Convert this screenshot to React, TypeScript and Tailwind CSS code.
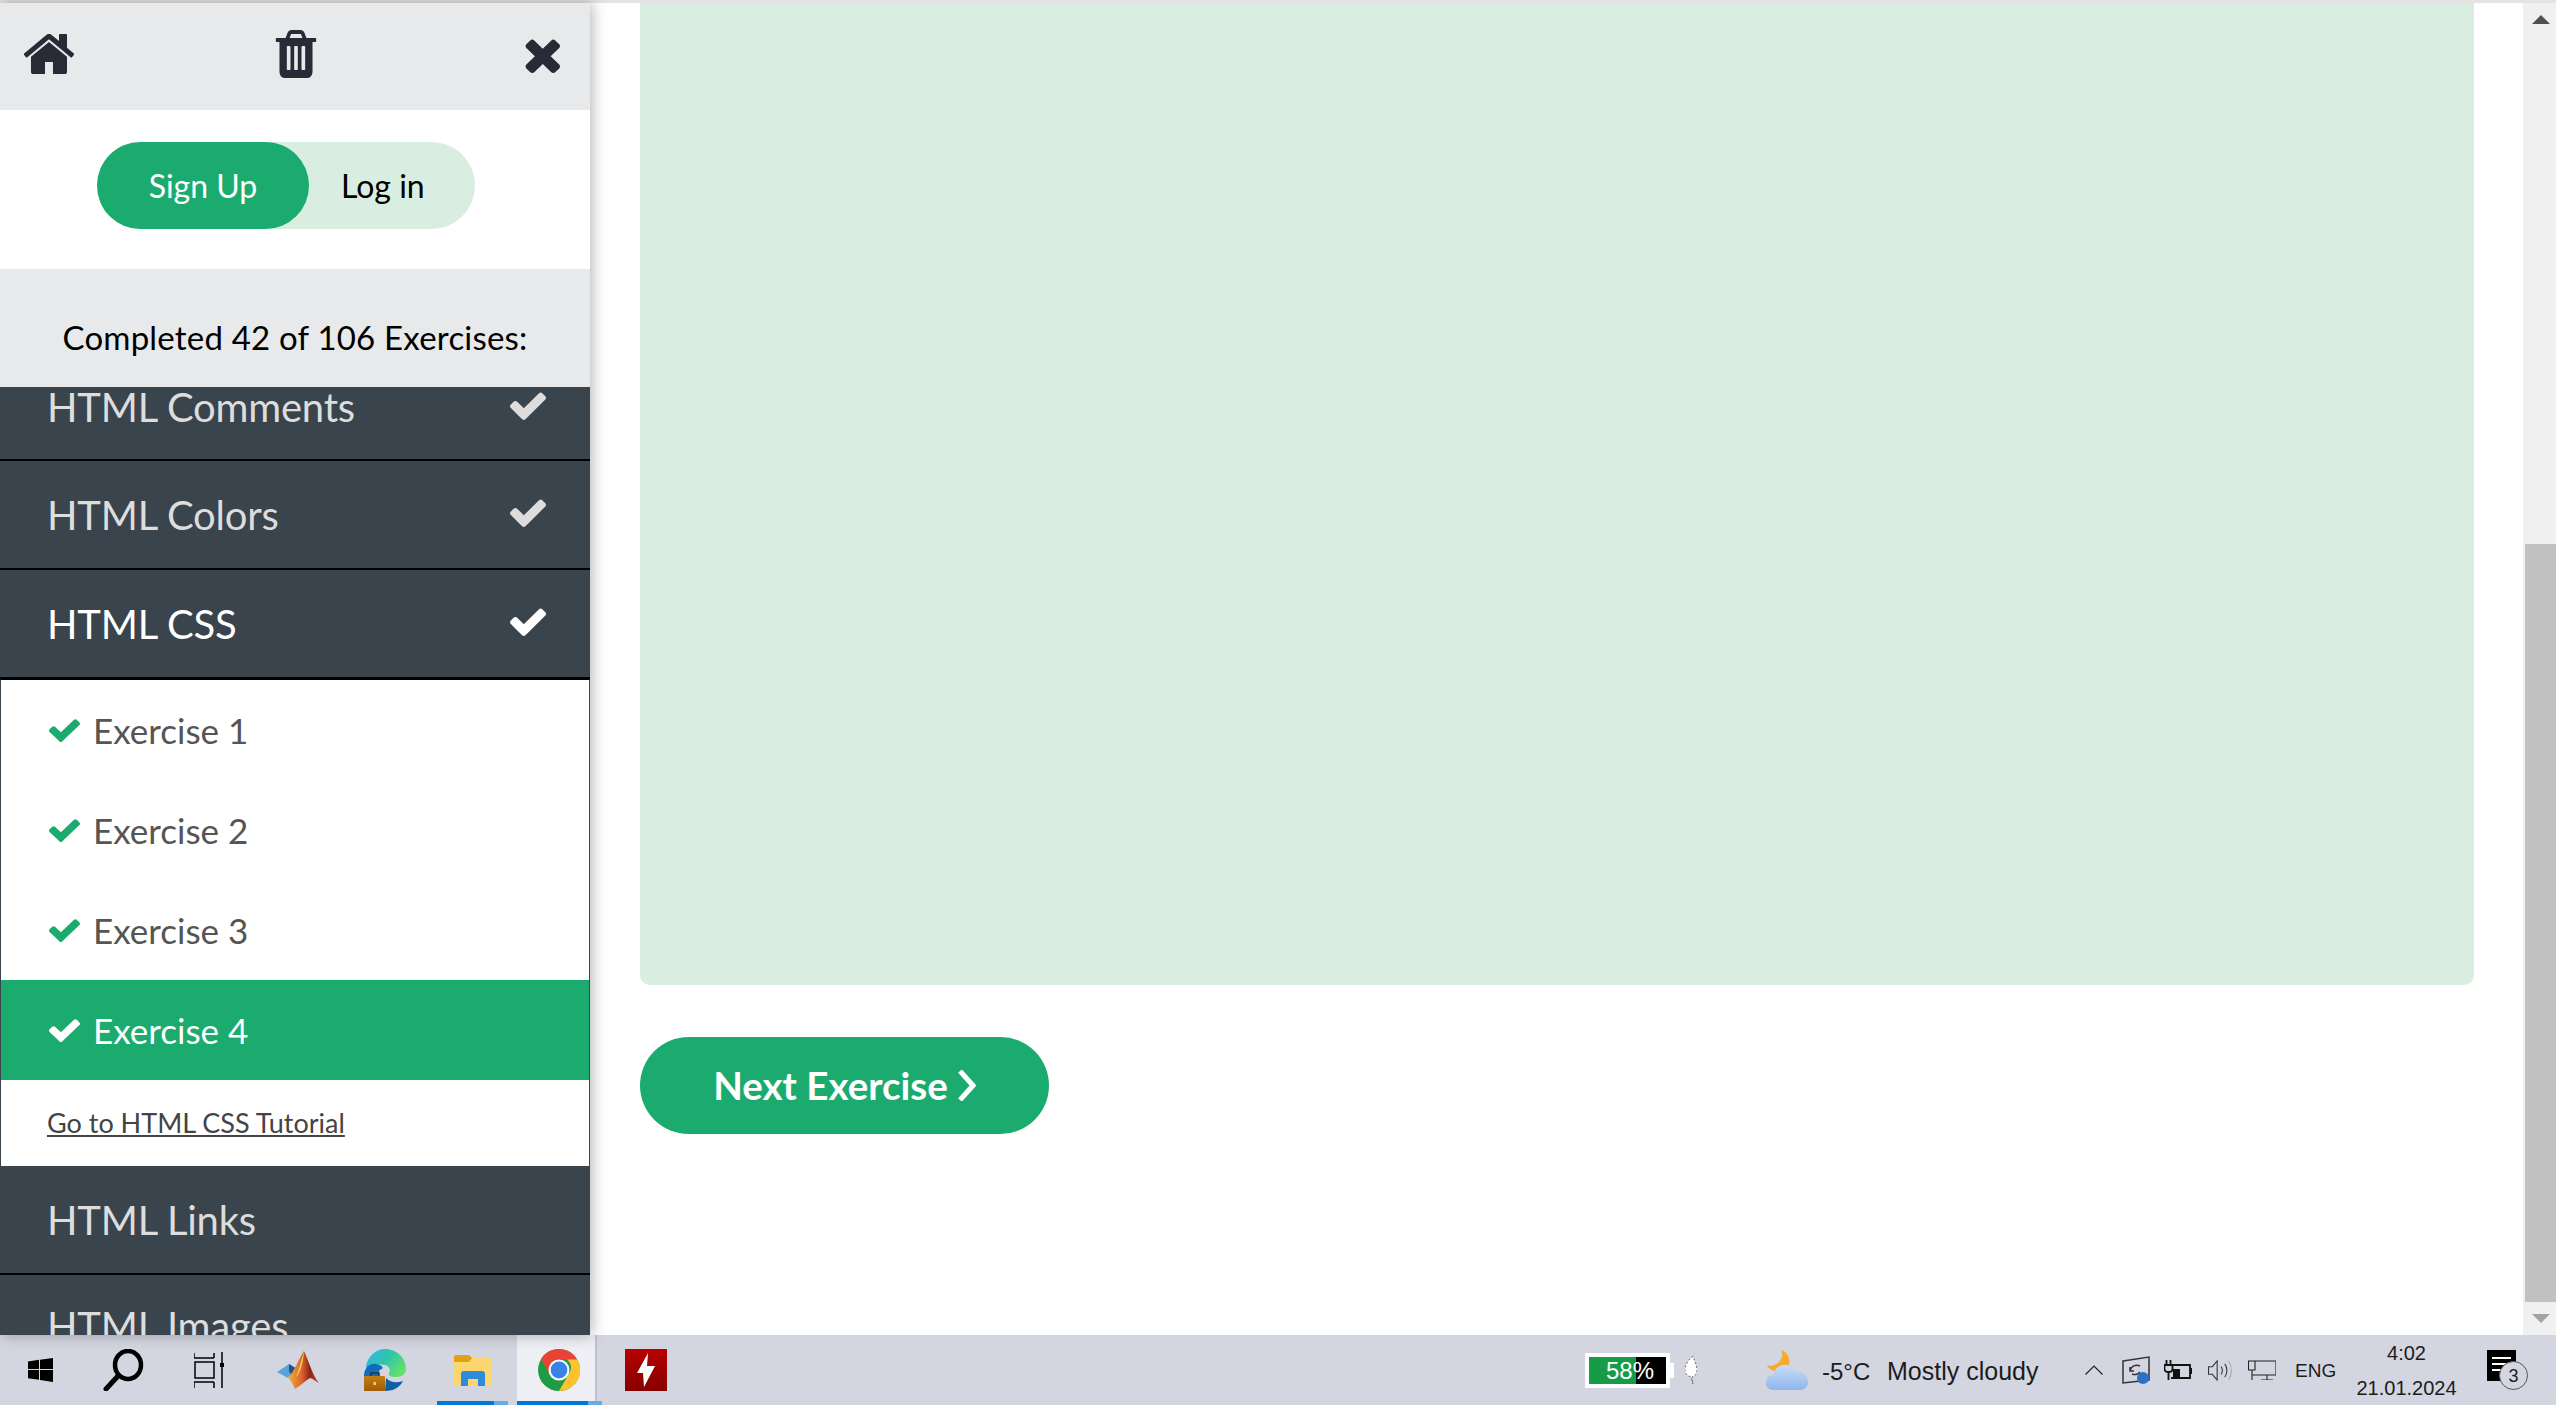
import type { ReactNode } from "react";

const checkPath =
  "M1671 566q0 40-28 68l-724 724-136 136q-28 28-68 28t-68-28l-136-136-362-362q-28-28-28-68t28-68l136-136q28-28 68-28t68 28l294 295 656-657q28-28 68-28t68 28l136 136q28 28 28 68z";

const Check = ({ className }: { className: string }) => (
  <svg viewBox="121 266 1550 1260" preserveAspectRatio="none" className={className} fill="currentColor">
    <path d={checkPath} />
  </svg>
);

const HomeIcon = () => (
  <svg viewBox="97 256 1599 1280" preserveAspectRatio="none" className="h-[40px] w-[50px]" fill="currentColor">
    <path d="M1472 992v480q0 26-19 45t-45 19h-384v-384h-256v384h-384q-26 0-45-19t-19-45v-480q0-1 .5-3t.5-3l575-474 575 474q1 2 1 6zm223-69l-62 74q-8 9-21 11h-3q-13 0-21-7l-692-577-692 577q-12 8-24 7-13-2-21-11l-62-74q-8-10-7-23.5t11-21.5l719-599q32-26 76-26t76 26l244 204v-195q0-14 9-23t23-9h192q14 0 23 9t9 23v408l219 182q10 8 11 21.5t-7 23.5z" />
  </svg>
);

const TrashIcon = () => (
  <svg viewBox="128 128 1536 1536" preserveAspectRatio="none" className="mr-[6px] h-[48px] w-[44px]" fill="currentColor">
    <path d="M704 1376v-704q0-14-9-23t-23-9h-64q-14 0-23 9t-9 23v704q0 14 9 23t23 9h64q14 0 23-9t9-23zm256 0v-704q0-14-9-23t-23-9h-64q-14 0-23 9t-9 23v704q0 14 9 23t23 9h64q14 0 23-9t9-23zm256 0v-704q0-14-9-23t-23-9h-64q-14 0-23 9t-9 23v704q0 14 9 23t23 9h64q14 0 23-9t9-23zm-544-992h448l-48-117q-7-9-17-11h-317q-10 2-17 11zm928 32v64q0 14-9 23t-23 9h-96v948q0 83-47 143.5t-113 60.5h-832q-66 0-113-58.5t-47-141.5v-952h-96q-14 0-23-9t-9-23v-64q0-14 9-23t23-9h309l70-167q15-37 54-63t79-26h320q40 0 79 26t54 63l70 167h309q14 0 23 9t9 23z" />
  </svg>
);

const CloseIcon = () => (
  <svg viewBox="214 238 1276 1316" preserveAspectRatio="none" className="h-[37px] w-[37px]" fill="currentColor">
    <path d="M1490 1322q0 40-28 68l-136 136q-28 28-68 28t-68-28l-294-294-294 294q-28 28-68 28t-68-28l-136-136q-28-28-28-68t28-68l294-294-294-294q-28-28-28-68t28-68l136-136q28-28 68-28t68 28l294 294 294-294q28-28 68-28t68 28l136 136q28 28 28 68t-28 68l-294 294 294 294q28 28 28 68z" />
  </svg>
);

const Topic = ({ name, bright, checked, cut }: { name: string; bright?: boolean; checked?: boolean; cut?: "top" | "bottom" }) => (
  <div
    className={`flex shrink-0 justify-between bg-[#3a444d] pl-[47px] pr-[44px] ${
      cut === "top"
        ? "h-[74px] items-start border-b-2 border-black"
        : cut === "bottom"
          ? "h-[60px] items-start pt-[31px]"
          : "h-[109px] items-center border-b-2 border-black"
    } ${bright ? "text-white" : "text-[#dddddd]"}`}
  >
    <span className={`text-[40px] leading-none tracking-[-0.2px] ${cut ? "" : "pt-[1px]"}`}>{name}</span>
    {checked && <Check className={`h-[29px] w-[36px] shrink-0 ${cut === "top" ? "mt-[4px]" : "-mt-[4px]"}`} />}
  </div>
);

const Exercise = ({ n, active }: { n: number; active?: boolean }) => (
  <div className={`flex h-[100px] items-center gap-[13px] pl-[48px] ${active ? "bg-[#1cab6e] text-white" : "text-[#555555]"}`}>
    <Check className={`h-[24px] w-[31px] ${active ? "text-white" : "text-[#1cab6e]"}`} />
    <span className="text-[35px] leading-none">Exercise {n}</span>
  </div>
);

const WindowsLogo = () => (
  <svg viewBox="0 0 25 24" className="h-[24px] w-[25px]" fill="#000">
    <path d="M0 3.4 11 1.8V11H0zM12 1.7 25 0V11H12zM0 12H11V21.7L0 20.2zM12 12H25V24L12 21.9z" />
  </svg>
);

const SearchGlyph = () => (
  <svg viewBox="0 0 42 42" className="h-[42px] w-[42px]" fill="none" stroke="#000">
    <ellipse cx="25" cy="16" rx="13" ry="14" strokeWidth="4.5" />
    <path d="M15 27 3 40" strokeWidth="5" strokeLinecap="round" />
  </svg>
);

const TaskView = () => (
  <svg viewBox="0 0 30 36" className="h-[36px] w-[30px]" fill="none" stroke="#000" strokeWidth="1.5">
    <path d="M0 6H20M0 1V6M20 1V6M1 10H20V26H1zM0 30H20M0 30V36M20 30V36M28 0V36" />
    <rect x="26" y="11" width="4" height="4" fill="#000" stroke="none" />
  </svg>
);

const Matlab = () => (
  <svg viewBox="0 0 42 38" className="h-[38px] w-[42px]">
    <defs>
      <linearGradient id="mlb" x1="0" y1="0" x2="1" y2="0">
        <stop offset="0" stopColor="#f0b040" />
        <stop offset="0.45" stopColor="#d9652a" />
        <stop offset="0.7" stopColor="#8e2418" />
        <stop offset="1" stopColor="#c2452a" />
      </linearGradient>
    </defs>
    <path d="M0 21 12 13 20 18 11 27z" fill="#5aa4de" />
    <path d="M12 13 20 18 14 24 12 20z" fill="#27527f" />
    <path d="M27 0C31 8 36 26 42 32 38 30 35 27 33 27 28 30 23 35 18 38 16 33 13 29 11 26 17 22 22 7 27 0z" fill="url(#mlb)" />
    <path d="M27 0C24 10 22 20 19 26 22 24 26 14 27 0z" fill="#f4d267" />
  </svg>
);

const Edge = () => (
  <svg viewBox="0 0 42 42" className="h-[42px] w-[42px]">
    <defs>
      <linearGradient id="edb" x1="0" y1="0" x2="1" y2="0.6">
        <stop offset="0" stopColor="#2fb4f0" />
        <stop offset="0.55" stopColor="#2fc6a8" />
        <stop offset="1" stopColor="#63e06a" />
      </linearGradient>
      <linearGradient id="edc" x1="0" y1="0" x2="0" y2="1">
        <stop offset="0" stopColor="#c27f12" />
        <stop offset="1" stopColor="#a15c0a" />
      </linearGradient>
    </defs>
    <path d="M2 17C4 7 12 0 21 0 33 0 42 9 42 20 42 25 38 28 32 28 27 28 24 27 25 24 27 20 25 17 21 16 14 14 6 17 2 24z" fill="url(#edb)" />
    <path d="M0 27C0 19 6 14 12 15 17 16 20 18 18 20 14 21 14 24 16 28H0z" fill="#0f6cc0" />
    <path d="M21 42C30 42 36 38 39 32 33 34 27 34 22 29z" fill="#0f5ea8" />
    <rect x="7" y="24" width="8" height="5" fill="none" stroke="#333" strokeWidth="1.5" />
    <rect x="0" y="27" width="21" height="15" rx="1" fill="url(#edc)" />
    <rect x="9.5" y="33" width="2.5" height="3" fill="#f2d05c" />
  </svg>
);

const Explorer = () => (
  <svg viewBox="0 0 38 31" className="h-[31px] w-[38px]">
    <path d="M0 2C0 1 1 0 2 0H15L18 3H37C37.5 3 38 3.5 38 4V29C38 30 37 31 36 31H2C1 31 0 30 0 29z" fill="#fbd56d" />
    <path d="M0 2C0 1 1 0 2 0H15L18 3 15 7H0z" fill="#dfa212" />
    <path d="M7 19C7 17 8 16 10 16H28C30 16 31 17 31 19V31H24V24H14V31H7z" fill="#2f8bd8" />
  </svg>
);

const Chrome = () => (
  <svg viewBox="0 0 42 42" className="h-[42px] w-[42px]">
    <circle cx="21" cy="21" r="21" fill="#1f9a46" />
    <path d="M21 0A21 21 0 0 1 39.2 10.5H21A10.5 10.5 0 0 0 11.5 25L3 10A21 21 0 0 1 21 0z" fill="#ea4335" />
    <path d="M39.2 10.5A21 21 0 0 1 21 42L30.5 25.5A10.5 10.5 0 0 0 29 10.5z" fill="#fcc32c" />
    <circle cx="21" cy="21" r="10.5" fill="#fff" />
    <circle cx="21" cy="21" r="8.4" fill="#3b82e8" />
  </svg>
);

const Flash = () => (
  <svg viewBox="0 0 42 42" className="h-[42px] w-[42px]">
    <defs>
      <linearGradient id="fl" x1="0" y1="0" x2="0" y2="1">
        <stop offset="0" stopColor="#b80000" />
        <stop offset="1" stopColor="#870000" />
      </linearGradient>
    </defs>
    <rect width="42" height="42" fill="url(#fl)" />
    <path d="M23 4 12 24H18L19 38 30 17H22z" fill="#fff" />
  </svg>
);

const TaskItem = ({ children, w }: { children: ReactNode; w: string }) => (
  <div className={`relative flex h-full items-center justify-center ${w}`}>{children}</div>
);

const RunningBar = () => (
  <div className="absolute bottom-0 left-0 flex h-[4px] w-full">
    <div className="flex-1 bg-[#0078d4]" />
    <div className="w-[14px] bg-[#66ade8]" />
  </div>
);

const Leaf = () => (
  <svg viewBox="0 0 12 28" className="h-[28px] w-[12px]">
    <path d="M8 0C3 4 0 9 0 14 0 18 3 20 6 21L8 28 7 21C10 20 12 18 12 14 12 9 9 4 8 0z" fill="#fff" stroke="#444" strokeWidth="0.8" strokeDasharray="2 2" />
  </svg>
);

const Cloud = () => (
  <svg viewBox="0 0 42 40" className="h-[40px] w-[42px]">
    <defs>
      <linearGradient id="cl" x1="0" y1="0" x2="0" y2="1">
        <stop offset="0" stopColor="#c8dcf6" />
        <stop offset="1" stopColor="#8fb6ee" />
      </linearGradient>
    </defs>
    <path d="M15 0C18 6 15 13 8 15 5 16 3 16 1 15 3 21 14 24 20 19 26 13 24 3 15 0z" fill="#f5ab2f" />
    <path d="M7 40C2 40 0 36 0 33 0 28 3 25 7 25 8 19 14 14 21 15 26 16 28 19 29 22 35 20 42 25 42 32 42 37 38 40 34 40z" fill="url(#cl)" />
  </svg>
);

const App = () => {
  return (
    <div className="flex h-[1405px] w-[2556px] flex-col overflow-hidden bg-white font-['Lato',sans-serif] text-black">
      <div className="flex min-h-0 flex-1 border-t-[3px] border-[#e3e3e3]">
        <aside className="relative z-10 flex w-[590px] shrink-0 flex-col shadow-[2px_0_14px_rgba(0,0,0,0.3)]">
          <div className="flex h-[107px] shrink-0 items-center justify-between bg-[#e7e9eb] pb-[5px] pl-[24px] pr-[30px] text-[#282a35]">
            <HomeIcon />
            <TrashIcon />
            <CloseIcon />
          </div>
          <div className="flex h-[159px] shrink-0 items-center justify-center bg-white pb-[8px] pr-[18px]">
            <div className="flex h-[87px] w-[378px] items-center rounded-full bg-[#d9eee1] text-[32px] leading-none">
              <div className="flex h-full w-[212px] items-center justify-center rounded-full bg-[#1cab6e] text-white">Sign Up</div>
              <div className="pl-[32px]">Log in</div>
            </div>
          </div>
          <div className="flex h-[118px] shrink-0 items-end justify-center bg-[#e7e9eb] pb-[33px] text-[33px] leading-none tracking-[0.2px]">
            Completed 42 of 106 Exercises:
          </div>
          <div className="flex min-h-0 flex-1 flex-col overflow-hidden">
            <Topic name="HTML Comments" checked cut="top" />
            <Topic name="HTML Colors" checked />
            <Topic name="HTML CSS" checked bright />
            <div className="flex shrink-0 flex-col border-x border-t border-x-[#3a444d] border-t-black bg-white">
              <Exercise n={1} />
              <Exercise n={2} />
              <Exercise n={3} />
              <Exercise n={4} active />
              <div className="flex h-[86px] items-center pl-[46px] text-[27px] text-[#444] underline">Go to HTML CSS Tutorial</div>
            </div>
            <Topic name="HTML Links" />
            <Topic name="HTML Images" cut="bottom" />
          </div>
        </aside>

        <main className="flex min-w-0 flex-1 flex-col pl-[50px] pr-[49px]">
          <div className="h-[982px] shrink-0 rounded-b-[10px] bg-[#d9eee1]" />
          <button className="mt-[52px] flex h-[97px] w-[409px] items-center justify-center gap-[10px] rounded-full bg-[#1cab6e] text-[38.5px] font-bold leading-none text-white">
            Next Exercise
            <svg viewBox="0 0 18 31" className="h-[31px] w-[18px]" fill="none" stroke="currentColor" strokeWidth="5">
              <path d="M2 1 15 15.5 2 30" />
            </svg>
          </button>
        </main>

        <div className="flex w-[33px] shrink-0 flex-col items-center justify-between bg-[#f0f0f0] pl-[2px]">
          <div className="flex h-[33px] items-center">
            <div className="h-0 w-0 border-x-[9px] border-b-[9px] border-x-transparent border-b-[#505050]" />
          </div>
          <div className="mt-[508px] w-full flex-1 bg-[#c1c1c1]" />
          <div className="flex h-[33px] items-center">
            <div className="h-0 w-0 border-x-[9px] border-t-[9px] border-x-transparent border-t-[#a3a3a3]" />
          </div>
        </div>
      </div>

      <footer className="flex h-[70px] shrink-0 items-center justify-between bg-[#d3d5e0] font-['Liberation_Sans',sans-serif] text-[#1c1c1c]">
        <div className="flex h-full items-center">
          <TaskItem w="w-[80px]"><WindowsLogo /></TaskItem>
          <TaskItem w="w-[88px]"><SearchGlyph /></TaskItem>
          <TaskItem w="w-[82px]"><TaskView /></TaskItem>
          <TaskItem w="w-[96px]"><Matlab /></TaskItem>
          <TaskItem w="w-[78px]"><Edge /></TaskItem>
          <TaskItem w="ml-[13px] w-[71px]">
            <Explorer />
            <RunningBar />
          </TaskItem>
          <div className="relative ml-[9px] flex h-full w-[85px]">
            <div className="flex h-full w-[80px] items-center justify-center border-r-2 border-[#bfc1cf] bg-[#eeeff5] pl-[6px]">
              <Chrome />
            </div>
            <RunningBar />
          </div>
          <TaskItem w="w-[88px]"><Flash /></TaskItem>
        </div>

        <div className="flex h-full items-center pr-[28px]">
          <div className="relative flex h-[35px] w-[85px] border-4 border-white bg-black text-[24px] leading-none text-white">
            <div className="h-full w-[47px] bg-[#169c46]" />
            <span className="absolute left-[17px] top-[2px]">58%</span>
          </div>
          <div className="h-[15px] w-[4px] bg-white" />
          <div className="ml-[11px]"><Leaf /></div>

          <div className="ml-[69px]"><Cloud /></div>
          <span className="ml-[14px] w-[48px] whitespace-nowrap pt-[3px] text-[24px]">-5°C</span>
          <span className="ml-[17px] w-[152px] whitespace-nowrap pt-[3px] text-[25px]">Mostly cloudy</span>

          <svg viewBox="0 0 18 10" className="ml-[46px] h-[10px] w-[18px]" fill="none" stroke="#222" strokeWidth="1.2">
            <path d="M0.5 9.5 9 1 17.5 9.5" />
          </svg>
          <svg viewBox="0 0 28 28" className="ml-[19px] h-[28px] w-[28px]" fill="none" stroke="#333" strokeWidth="1.5">
            <path d="M1 5 27 1V24L1 27z" />
            <path d="M8 15C9 10 14 8 18 10M8 11V15H12M18 16C16 19 12 19 10 18" />
            <circle cx="21" cy="22" r="6" fill="#2a72c4" stroke="none" />
          </svg>
          <svg viewBox="0 0 28 20" className="ml-[14px] h-[20px] w-[28px]" fill="none" stroke="#111" strokeWidth="1.8">
            <path d="M2.5 0V5M6.5 0V5M0.5 5H8.5V9C8.5 11 7 12 4.500 12 2 12 0.500 11 0.500 9zM4.500 12V20M9 5H26V18H7" />
            <rect x="9" y="9" width="7" height="8" fill="#111" stroke="none" />
            <rect x="26" y="8" width="2" height="6" fill="#111" stroke="none" />
          </svg>
          <svg viewBox="0 0 26 22" className="ml-[15px] h-[21px] w-[26px]" fill="none" stroke="#333" strokeWidth="1.1">
            <path d="M1 7H5L10 1V21L5 15H1z" />
            <path d="M14 7C16 9 16 13 14 15M18 4C21 8 21 14 18 18" />
            <path d="M22 1C26 7 26 15 22 21" stroke="#aaa" />
          </svg>
          <svg viewBox="0 0 28 20" className="ml-[15px] h-[20px] w-[28px]" fill="none" stroke="#222" strokeWidth="1.1">
            <path d="M4 1H28V15H4M0.500 1H7V10H0.500zM4 10V20M13 20H25M19 15V20" />
          </svg>
          <span className="ml-[19px] w-[41px] whitespace-nowrap pt-[3px] text-[19px]">ENG</span>
          <div className="ml-[21px] flex w-[99px] flex-col items-center whitespace-nowrap pt-[1px] text-[20px] leading-[35px]">
            <span>4:02</span>
            <span>21.01.2024</span>
          </div>
          <div className="relative ml-[31px] h-[40px] w-[41px]">
            <div className="h-[31px] w-[29px] bg-black" />
            <div className="absolute left-[5px] top-[7px] h-[2px] w-[19px] bg-white" />
            <div className="absolute left-[5px] top-[13px] h-[2px] w-[19px] bg-white" />
            <div className="absolute left-[5px] top-[19px] h-[2px] w-[13px] bg-white" />
            <div className="absolute left-[12px] top-[11px] flex h-[29px] w-[29px] items-center justify-center rounded-full border border-[#555] bg-[#d3d5e0] text-[18px] leading-none">3</div>
          </div>
        </div>
      </footer>
    </div>
  );
};

export default App;
